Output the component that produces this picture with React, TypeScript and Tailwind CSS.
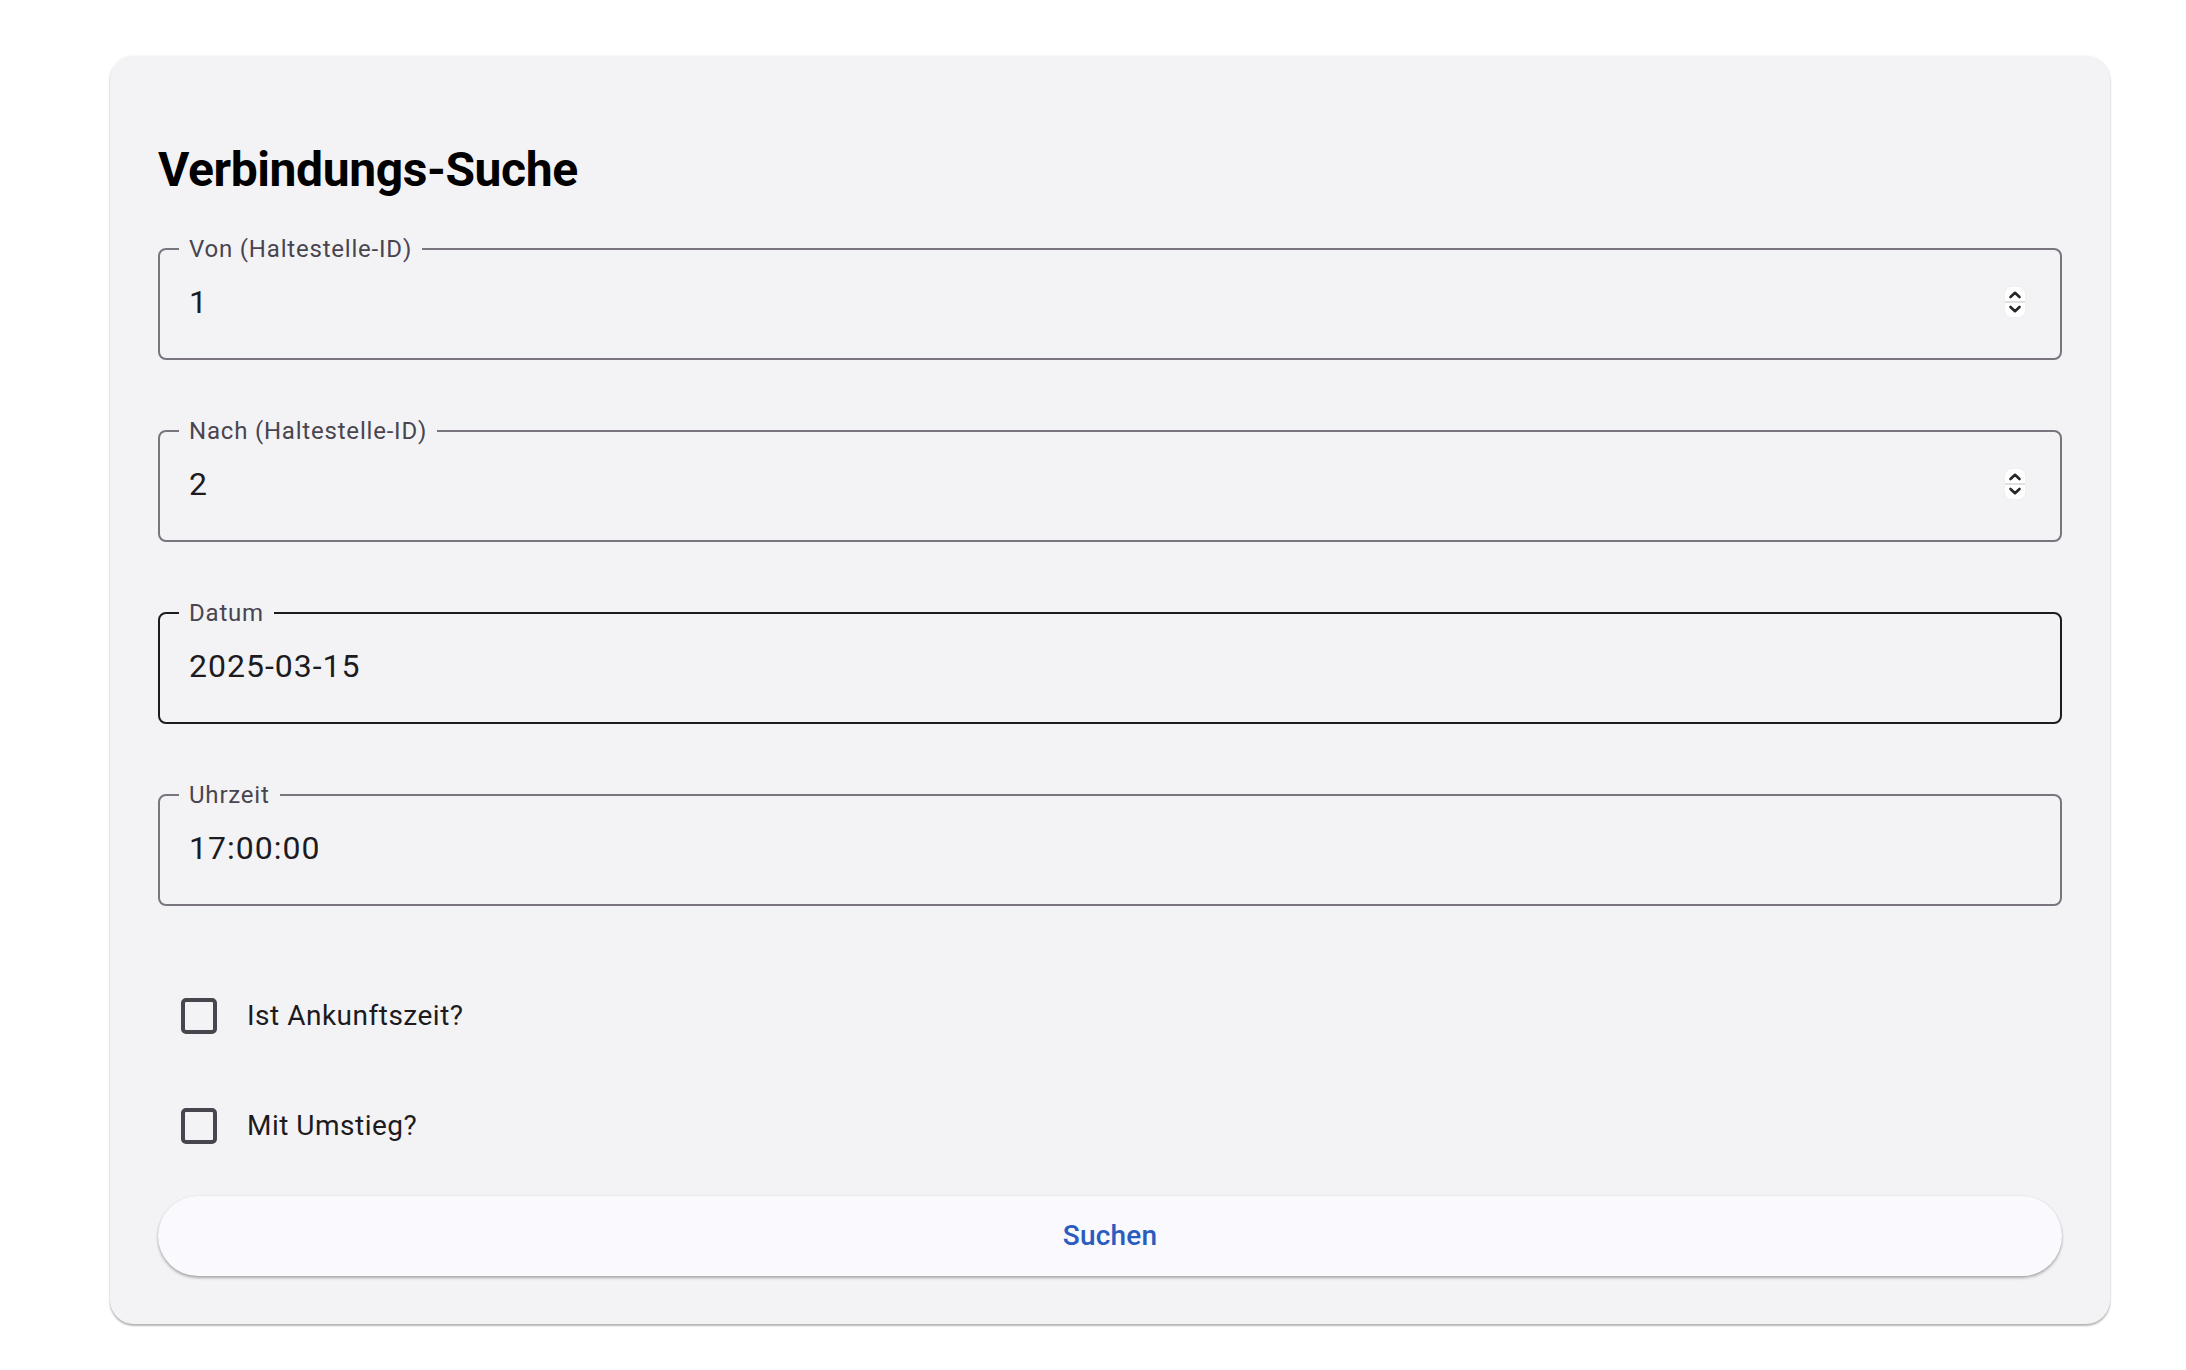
import React from 'react'

const Spinner: React.FC = () => (
  <svg width="24" height="34" viewBox="0 0 24 34" className="mr-[4px] shrink-0">
    <rect x="1" y="1" width="22" height="32" rx="8.5" fill="#d9d9dc" opacity="0.6" />
    <rect x="1.5" y="1.5" width="21" height="31" rx="8" fill="#ffffff" />
    <line x1="2" y1="17" x2="22" y2="17" stroke="#d6d6d9" strokeWidth="1.5" />
    <path d="M7.5 12 L12 7.8 L16.5 12" fill="none" stroke="#262626" strokeWidth="2.6" strokeLinecap="round" strokeLinejoin="round" />
    <path d="M7.5 22 L12 26.2 L16.5 22" fill="none" stroke="#262626" strokeWidth="2.6" strokeLinecap="round" strokeLinejoin="round" />
  </svg>
)

type FieldProps = {
  label: string
  value: string
  number?: boolean
  hover?: boolean
}

const Field: React.FC<FieldProps> = ({ label, value, number, hover }) => (
  <fieldset
    className={
      hover
        ? 'm-0 min-w-0 rounded-[8px] border-2 border-[#1d1b20] pt-[18px] pr-[29px] pb-[33px] pl-[29px]'
        : 'm-0 min-w-0 rounded-[8px] border-2 border-[#79747e] pt-[18px] pr-[29px] pb-[33px] pl-[29px]'
    }
  >
    <legend className="ml-[-10px] px-[10px] text-[24px] leading-[24px] tracking-[0.8px] text-[#49454f]">{label}</legend>
    <div className="flex items-center">
      <span className="flex-1 text-[32px] leading-[46px] tracking-[1px] text-[#1d1b20]">{value}</span>
      {number && <Spinner />}
    </div>
  </fieldset>
)

const Check: React.FC<{ label: string }> = ({ label }) => (
  <label className="flex h-[84px] items-center">
    <span className="ml-[23px] size-[36px] rounded-[5px] border-4 border-[#49454f]" />
    <span className="ml-[30px] text-[28px] leading-[42px] tracking-[0.5px] text-[#1d1b20]">{label}</span>
  </label>
)

const App: React.FC = () => {
  return (
    <div className="min-h-[1370px] bg-white pt-[56px] pl-[110px] font-['Roboto',sans-serif]">
      <div className="flex w-[2000px] flex-col rounded-[24px] bg-[#f3f3f6] px-[48px] pt-[82px] pb-[48px] shadow-[0_2px_2px_rgba(0,0,0,0.28),0_0_3px_rgba(0,0,0,0.08)]">
        <h1 className="text-[48px] leading-[64px] font-bold tracking-[-0.4px] text-[#000000]">Verbindungs-Suche</h1>

        <div className="mt-[35px] flex flex-col gap-[59px]">
          <Field label="Von (Haltestelle-ID)" value="1" number />
          <Field label="Nach (Haltestelle-ID)" value="2" number />
          <Field label="Datum" value="2025-03-15" hover />
          <Field label="Uhrzeit" value="17:00:00" />
        </div>

        <div className="mt-[68px] flex flex-col gap-[26px]">
          <Check label="Ist Ankunftszeit?" />
          <Check label="Mit Umstieg?" />
        </div>

        <button className="mt-[28px] h-[80px] w-full rounded-full bg-[#f9f9fe] text-[28px] font-medium tracking-[0.2px] text-[#2a5bbf] shadow-[0_2px_3px_rgba(0,0,0,0.3),0_0_2px_rgba(0,0,0,0.08)]">
          Suchen
        </button>
      </div>
    </div>
  )
}

export default App
